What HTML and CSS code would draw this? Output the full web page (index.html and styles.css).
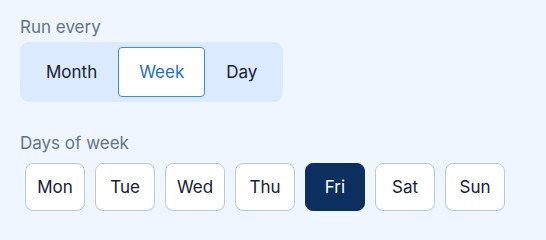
FILE: index.html
```html
<!DOCTYPE html>
<html>
<head>
<meta charset="utf-8">
<link rel="stylesheet" href="styles.css">
</head>
<body>
<div class="panel">
  <div class="field">
    <div class="label">Run every</div>
    <div class="segmented">
      <button class="seg">Month</button>
      <button class="seg active">Week</button>
      <button class="seg">Day</button>
    </div>
  </div>
  <div class="field days-field">
    <div class="label">Days of week</div>
    <div class="days">
      <button class="day">Mon</button>
      <button class="day">Tue</button>
      <button class="day">Wed</button>
      <button class="day">Thu</button>
      <button class="day selected">Fri</button>
      <button class="day">Sat</button>
      <button class="day">Sun</button>
    </div>
  </div>
</div>
</body>
</html>
```

FILE: styles.css
```css
html, body {
  margin: 0;
  padding: 0;
  background: #eff6ff;
  font-family: Inter, "Noto Sans", sans-serif;
}
.panel {
  padding: 17px 20px 0 20px;
  display: flex;
  flex-direction: column;
}
.field {
  display: flex;
  flex-direction: column;
  align-items: flex-start;
}
.days-field {
  margin-top: 31px;
}
.label {
  font-size: 17px;
  line-height: 20px;
  color: #64748b;
  margin-bottom: 5px;
}
.segmented {
  display: flex;
  padding: 5px;
  background: #dbeafe;
  border-radius: 9px;
}
button {
  font-family: inherit;
  cursor: pointer;
}
.seg {
  height: 50px;
  padding: 0 20px;
  border: 1px solid transparent;
  background: transparent;
  border-radius: 4px;
  font-size: 17px;
  color: #172033;
}
.seg.active {
  background: #ffffff;
  border-color: #3b8ce3;
  color: #1d6fd1;
}
.days {
  display: flex;
  gap: 10px;
  padding: 5px;
}
.day {
  width: 60px;
  height: 48px;
  padding: 0;
  background: #ffffff;
  border: 1px solid #b5cbe3;
  border-radius: 8px;
  font-size: 17px;
  color: #172033;
}
.day.selected {
  background: #0b3060;
  border-color: #0b3060;
  color: #ffffff;
}
```
